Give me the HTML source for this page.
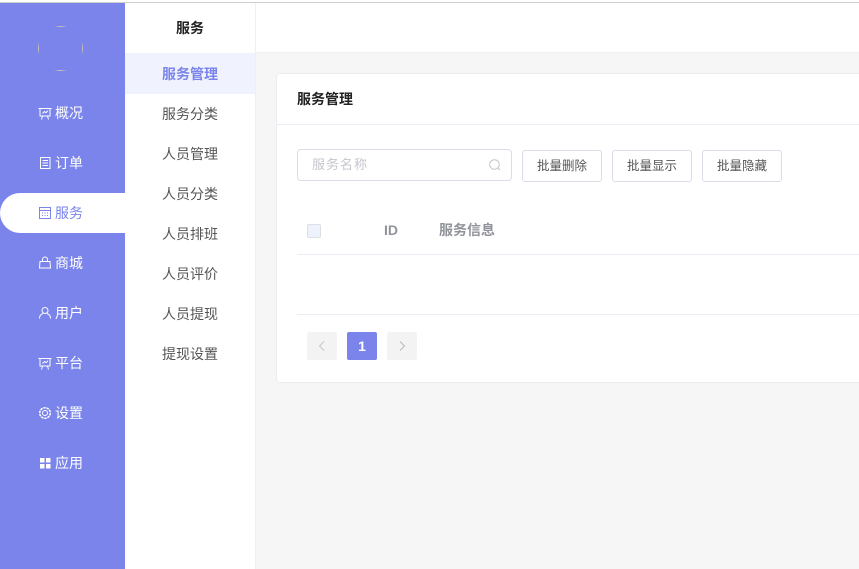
<!DOCTYPE html>
<html lang="zh">
<head>
<meta charset="utf-8">
<title>服务管理</title>
<style>
*{box-sizing:border-box;margin:0;padding:0}
html,body{width:859px;height:569px;overflow:hidden;background:#f6f6f6;font-family:"Liberation Sans","WenQuanYi Zen Hei","Noto Sans CJK SC",sans-serif;font-size:14px}
.abs{position:absolute}
#top{left:0;top:0;width:859px;height:3px;background:#fff;border-bottom:1px solid #cfcfcf}
#side{left:0;top:3px;width:125px;height:566px;background:#7a84ea}
#active{left:0;top:193px;width:125px;height:40px;background:#fff;border-radius:20px 0 0 20px}
.m{position:absolute;left:55px;width:40px;height:20px;line-height:20px;color:#fff;font-size:14px;white-space:nowrap}
.ic{position:absolute;left:38px;width:14px;height:14px;fill:none;stroke:#fff;stroke-width:1}
#sub{left:125px;top:3px;width:131px;height:566px;background:#fff;border-right:1px solid #f0f0f3}
.s{position:absolute;left:125px;width:130px;height:40px;line-height:40px;text-align:center;color:#555;font-size:14px}
#head{left:256px;top:3px;width:603px;height:50px;background:#fff;border-bottom:1px solid #f0f0f3}
#card{left:276px;top:73px;width:590px;height:310px;background:#fff;border:1px solid #ececf2;border-radius:4px}
.line{position:absolute;height:1px;background:#ececf4}
.btn{position:absolute;top:150px;width:80px;height:32px;line-height:30px;background:#fff;border:1px solid #dcdde8;border-radius:3px;text-align:center;font-size:12.5px;color:#555}
.pg{position:absolute;top:332px;width:30px;height:28px;background:#f3f3f3;border-radius:2px}
</style>
</head>
<body>
<div class="abs" id="side"></div>
<div class="abs" id="top"></div>
<div class="abs" style="left:54px;top:26px;width:13px;height:1px;background:linear-gradient(90deg,#7a84ea,#c9c6b8,#7a84ea)"></div>
<div class="abs" style="left:54px;top:70px;width:13px;height:1px;background:linear-gradient(90deg,#7a84ea,#c9c6b8,#7a84ea)"></div>
<div class="abs" style="left:38px;top:42px;width:1px;height:13px;background:linear-gradient(#7a84ea,#c9c6b8,#7a84ea)"></div>
<div class="abs" style="left:82px;top:42px;width:1px;height:13px;background:linear-gradient(#7a84ea,#c9c6b8,#7a84ea)"></div>
<div class="abs" id="active"></div>

<svg class="ic" style="top:107px" viewBox="0 0 14 14"><path d="M.5 1.500h13M2 1.500v7.500h10v-7.500M4.500 6.500l2-2 1.500 1.200 2-2M4.500 9l-1 3.500M9.500 9l1 3.500"/></svg>
<div class="m" style="top:103px">概况</div>
<svg class="ic" style="top:156px" viewBox="0 0 14 14"><path d="M2.500 1.500h9.500v11h-9.500zM4.500 4.500h5.500M4.500 7h5.500M4.500 9.500h5.500"/></svg>
<div class="m" style="top:153px">订单</div>
<svg class="ic" style="top:206px;stroke:#7a84ea" viewBox="0 0 14 14"><path d="M1.500 1.500h11v11h-11zM1.500 4.500h11M4 7h1M6.500 7h1M9 7h1M4 9.500h1M6.500 9.500h1M9 9.500h1"/></svg>
<div class="m" style="top:203px;color:#7a84ea">服务</div>
<svg class="ic" style="top:256px" viewBox="0 0 14 14"><path d="M2 5.500h10l.5 6.500h-11zM4.500 5.500v-2a2.500 2.500 0 0 1 5 0v2"/></svg>
<div class="m" style="top:253px">商城</div>
<svg class="ic" style="top:306px" viewBox="0 0 14 14"><circle cx="7" cy="4.500" r="3"/><path d="M1.500 12.500c0-3 2-4.500 3.500-5M12.500 12.500c0-3-2-4.500-3.500-5"/></svg>
<div class="m" style="top:303px">用户</div>
<svg class="ic" style="top:357px" viewBox="0 0 14 14"><path d="M.5 1.500h13M2 1.500v7.500h10v-7.500M4.500 6.500l2-2 1.500 1.200 2-2M4.500 9l-1 3.500M9.500 9l1 3.500"/></svg>
<div class="m" style="top:353px">平台</div>
<svg class="ic" style="top:406px" viewBox="0 0 14 14"><circle cx="7" cy="7" r="2.500"/><circle cx="7" cy="7" r="5.300" stroke-width="1.500" stroke-dasharray="2.500 .8"/></svg>
<div class="m" style="top:403px">设置</div>
<svg class="ic" style="top:456px;stroke:none;fill:#fff" viewBox="0 0 14 14"><path d="M2 2h4.500v4.500h-4.500zM8 2h4.500v4.500h-4.500zM2 8h4.500v4.500h-4.500zM8 8h4.500v4.500h-4.500z"/></svg>
<div class="m" style="top:453px">应用</div>

<div class="abs" id="sub"></div>
<div class="s" style="top:8px;color:#222;font-weight:bold">服务</div>
<div class="s" style="top:53px;height:41px;line-height:42px;background:#f0f3fd;color:#7a84ea;font-weight:bold">服务管理</div>
<div class="s" style="top:94px">服务分类</div>
<div class="s" style="top:134px">人员管理</div>
<div class="s" style="top:174px">人员分类</div>
<div class="s" style="top:214px">人员排班</div>
<div class="s" style="top:254px">人员评价</div>
<div class="s" style="top:294px">人员提现</div>
<div class="s" style="top:334px">提现设置</div>

<div class="abs" id="head"></div>
<div class="abs" id="card"></div>
<div class="abs" style="left:297px;top:89px;line-height:20px;font-size:14px;font-weight:bold;color:#222">服务管理</div>
<div class="line" style="left:277px;top:124px;width:582px"></div>

<div class="abs" style="left:297px;top:149px;width:215px;height:32px;border:1px solid #dcdde8;border-radius:4px;background:#fff"></div>
<div class="abs" style="left:312px;top:155px;line-height:20px;font-size:13px;color:#c4c6cf;letter-spacing:1px">服务名称</div>
<svg class="abs" style="left:488px;top:158px" width="14" height="14" viewBox="0 0 14 14" fill="none" stroke="#c4c6cf"><circle cx="6.500" cy="6.500" r="4.800"/><path d="M10 10l2 2"/></svg>

<div class="btn" style="left:522px">批量删除</div>
<div class="btn" style="left:612px">批量显示</div>
<div class="btn" style="left:702px">批量隐藏</div>

<div class="abs" style="left:307px;top:224px;width:14px;height:14px;background:#edf2fc;border:1px solid #dcdfe6;border-radius:2px"></div>
<div class="abs" style="left:384px;top:220px;line-height:20px;font-size:14px;font-weight:bold;color:#909399">ID</div>
<div class="abs" style="left:439px;top:220px;line-height:20px;font-size:14px;font-weight:bold;color:#909399">服务信息</div>
<div class="line" style="left:297px;top:254px;width:562px"></div>
<div class="line" style="left:297px;top:314px;width:562px"></div>

<div class="pg" style="left:307px"></div>
<svg class="abs" style="left:317px;top:340px" width="10" height="12" viewBox="0 0 10 12" fill="none" stroke="#c4c6cf"><path d="M7 1.500l-4.500 4.500 4.500 4.500"/></svg>
<div class="pg" style="left:347px;background:#7a84ea;color:#fff;font-weight:bold;text-align:center;line-height:28px;font-size:14px">1</div>
<div class="pg" style="left:387px"></div>
<svg class="abs" style="left:397px;top:340px" width="10" height="12" viewBox="0 0 10 12" fill="none" stroke="#b4b7c0"><path d="M3 1.500l4.500 4.500-4.500 4.500"/></svg>
</body>
</html>
